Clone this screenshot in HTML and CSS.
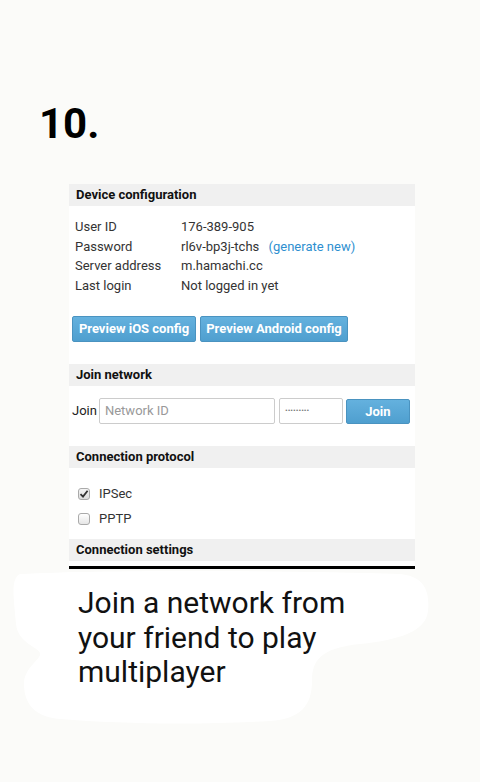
FILE: index.html
```html
<!DOCTYPE html>
<html>
<head>
<meta charset="utf-8">
<link rel="stylesheet" href="styles.css">
</head>
<body>
<div class="page">
  <h1 class="step">10.</h1>
  <div class="card">
    <div class="sec-head">Device configuration</div>
    <div class="info">
      <div class="row"><span class="lbl">User ID</span><span class="val">176-389-905</span></div>
      <div class="row"><span class="lbl">Password</span><span class="val">rl6v-bp3j-tchs <a class="link">(generate new)</a></span></div>
      <div class="row"><span class="lbl">Server address</span><span class="val">m.hamachi.cc</span></div>
      <div class="row"><span class="lbl">Last login</span><span class="val">Not logged in yet</span></div>
    </div>
    <div class="btns">
      <span class="btn ios">Preview iOS config</span>
      <span class="btn android">Preview Android config</span>
    </div>
    <div class="sec-head">Join network</div>
    <div class="join">
      <span class="join-lbl">Join</span>
      <span class="inp net">Network ID</span>
      <span class="inp pw">•••••••••</span>
      <span class="btn join-btn">Join</span>
    </div>
    <div class="sec-head">Connection protocol</div>
    <div class="checks">
      <div class="chk"><span class="box on"><svg width="10" height="10" viewBox="0 0 10 10"><path d="M1.5 5.2 L4 7.6 L8.6 1.8" fill="none" stroke="#333" stroke-width="1.8"/></svg></span>IPSec</div>
      <div class="chk"><span class="box"></span>PPTP</div>
    </div>
    <div class="sec-head">Connection settings</div>
  </div>
  <div class="caption-wrap">
    <svg class="blob" width="480" height="170" viewBox="0 0 480 170"><path d="M20 5 C120 0 300 2 400 5 C424 7 430 22 428 42 C426 62 400 71 360 75 C320 79 312 92 312 112 C312 137 300 150 270 152 C200 156 120 155 60 150 C35 148 24 135 24 115 C24 98 42 90 40 84 C38 78 18 74 16 55 C14 30 10 10 20 5 Z" fill="#ffffff"/></svg>
    <p class="caption">Join a network from your friend to play multiplayer</p>
  </div>
</div>
</body>
</html>
```
FILE: styles.css
```css
html, body {
  margin: 0;
  padding: 0;
  background: #fbfbf9;
}
.page {
  width: 480px;
  height: 782px;
  font-family: Roboto, "Liberation Sans", sans-serif;
  color: #222;
  overflow: hidden;
}
.step {
  margin: 0;
  padding: 99px 0 0 39px;
  font-size: 42px;
  line-height: 50px;
  font-weight: 700;
  color: #000;
  height: 85px;
}
.card {
  margin-left: 69px;
  width: 346px;
  background: #fff;
  padding-bottom: 5px;
  border-bottom: 3px solid #000;
  font-size: 13px;
}
.sec-head {
  background: #f0f0f0;
  height: 22px;
  line-height: 22px;
  padding-left: 7px;
  font-weight: 700;
  color: #111;
}
.info {
  padding: 11px 0 0 6px;
}
.row {
  display: flex;
  height: 19.5px;
  line-height: 19.5px;
  color: #333;
}
.lbl {
  width: 106px;
}
.link {
  color: #2e8fd0;
  margin-left: 6px;
}
.btns {
  display: flex;
  gap: 4px;
  padding: 21px 0 0 3px;
  height: 69px;
  box-sizing: border-box;
}
.btn {
  display: inline-block;
  background: linear-gradient(#64b1de, #4f9fcf);
  border: 1px solid #4a93c0;
  border-radius: 2px;
  color: #fff;
  font-weight: 700;
  height: 26px;
  line-height: 24px;
  padding: 0;
  box-sizing: border-box;
  white-space: nowrap;
  text-align: center;
}
.ios { width: 124px; }
.android { width: 148px; }
.join {
  display: flex;
  align-items: flex-start;
  padding: 12px 0 0 3px;
  height: 60px;
  box-sizing: border-box;
}
.join-lbl {
  line-height: 26px;
  color: #222;
  margin-right: 2px;
}
.inp {
  border: 1px solid #ccc;
  border-radius: 2px;
  height: 26px;
  line-height: 24px;
  box-sizing: border-box;
  color: #999;
  padding-left: 5px;
  background: #fff;
}
.net { width: 176px; margin-right: 4px; }
.pw { width: 64px; font-size: 8px; color: #777; margin-right: 3px; }
.join-btn { width: 64px; margin-top: 1px; height: 25px; line-height: 23px; }
.checks {
  padding: 13px 0 0 9px;
  height: 71px;
  box-sizing: border-box;
}
.chk {
  display: flex;
  align-items: center;
  height: 25px;
  color: #333;
}
.box {
  width: 12px;
  height: 12px;
  border: 1px solid #aaa;
  border-radius: 3px;
  background: linear-gradient(#fff, #e6e6e6);
  margin-right: 9px;
  display: inline-flex;
  align-items: center;
  justify-content: center;
  box-sizing: border-box;
}
.box.on { background: linear-gradient(#f4f4f4, #dcdcdc); }
.caption-wrap {
  position: relative;
  height: 200px;
}
.blob {
  position: absolute;
  left: 0;
  top: 0;
}
.caption {
  position: relative;
  margin: 0;
  padding: 17px 0 0 78px;
  width: 290px;
  font-size: 30px;
  line-height: 34.5px;
  color: #111;
}
```
